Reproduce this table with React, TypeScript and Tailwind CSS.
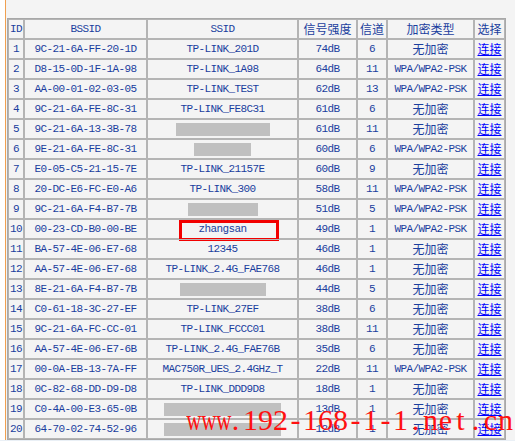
type Row = {
  bssid: string
  ssid?: string
  mask?: number
  signal: string
  channel: string
  enc: string
}

const rows: Row[] = [
  { bssid: '9C-21-6A-FF-20-1D', ssid: 'TP-LINK_201D', signal: '74dB', channel: '6', enc: '无加密' },
  { bssid: 'D8-15-0D-1F-1A-98', ssid: 'TP-LINK_1A98', signal: '64dB', channel: '11', enc: 'WPA/WPA2-PSK' },
  { bssid: 'AA-00-01-02-03-05', ssid: 'TP-LINK_TEST', signal: '62dB', channel: '13', enc: 'WPA/WPA2-PSK' },
  { bssid: '9C-21-6A-FE-8C-31', ssid: 'TP-LINK_FE8C31', signal: '61dB', channel: '6', enc: '无加密' },
  { bssid: '9C-21-6A-13-3B-78', mask: 94, signal: '61dB', channel: '11', enc: '无加密' },
  { bssid: '9E-21-6A-FE-8C-31', mask: 57, signal: '60dB', channel: '6', enc: 'WPA/WPA2-PSK' },
  { bssid: 'E0-05-C5-21-15-7E', ssid: 'TP-LINK_21157E', signal: '60dB', channel: '9', enc: '无加密' },
  { bssid: '20-DC-E6-FC-E0-A6', ssid: 'TP-LINK_300', signal: '58dB', channel: '11', enc: 'WPA/WPA2-PSK' },
  { bssid: '9C-21-6A-F4-B7-7B', mask: 70, signal: '51dB', channel: '5', enc: 'WPA/WPA2-PSK' },
  { bssid: '00-23-CD-B0-00-BE', ssid: 'zhangsan', signal: '49dB', channel: '1', enc: 'WPA/WPA2-PSK' },
  { bssid: 'BA-57-4E-06-E7-68', ssid: '12345', signal: '46dB', channel: '1', enc: '无加密' },
  { bssid: 'AA-57-4E-06-E7-68', ssid: 'TP-LINK_2.4G_FAE768', signal: '46dB', channel: '1', enc: '无加密' },
  { bssid: '8E-21-6A-F4-B7-7B', mask: 86, signal: '44dB', channel: '5', enc: '无加密' },
  { bssid: 'C0-61-18-3C-27-EF', ssid: 'TP-LINK_27EF', signal: '38dB', channel: '6', enc: '无加密' },
  { bssid: '9C-21-6A-FC-CC-01', ssid: 'TP-LINK_FCCC01', signal: '38dB', channel: '11', enc: '无加密' },
  { bssid: 'AA-57-4E-06-E7-6B', ssid: 'TP-LINK_2.4G_FAE76B', signal: '35dB', channel: '6', enc: '无加密' },
  { bssid: '00-0A-EB-13-7A-FF', ssid: 'MAC750R_UES_2.4GHz_T', signal: '22dB', channel: '11', enc: 'WPA/WPA2-PSK' },
  { bssid: '0C-82-68-DD-D9-D8', ssid: 'TP-LINK_DDD9D8', signal: '18dB', channel: '1', enc: '无加密' },
  { bssid: 'C0-4A-00-E3-65-0B', mask: 117, signal: '13dB', channel: '1', enc: '无加密' },
  { bssid: '64-70-02-74-52-96', mask: 117, signal: '12dB', channel: '1', enc: '无加密' },
]

const cell = 'h-5 p-0 border border-[#b4b4b4] text-center align-middle leading-none text-[#1a3e9e]'
const mono = "font-['Liberation_Mono',monospace] text-[11px] tracking-[-0.6px]"
const cn = "font-['Noto_Sans_CJK_SC',sans-serif] text-[12px]"

const watermark = 'www.192-168-1-1.net.cn'

export default function App() {
  return (
    <div className="relative w-[515px] h-[441px] overflow-hidden bg-[#f4f4f4] flex flex-col">
      <div className="flex flex-1">
        <div className="w-[5px] bg-white" />
        <div className="w-px bg-[#f0a050]" />
        <div className="flex-1 pt-[18px] pl-px">
          <table className="table-fixed border-separate border-spacing-0 border border-[#a8a8a8] w-[499px] bg-[#f4f4f4]">
            <thead>
              <tr>
                <th className={`${cell} ${mono} font-normal w-[16px]`}>ID</th>
                <th className={`${cell} ${mono} font-normal w-[123px]`}>BSSID</th>
                <th className={`${cell} ${mono} font-normal w-[151px]`}>SSID</th>
                <th className={`${cell} ${cn} font-normal w-[59px]`}>信号强度</th>
                <th className={`${cell} ${cn} font-normal w-[30px]`}>信道</th>
                <th className={`${cell} ${cn} font-normal w-[87px]`}>加密类型</th>
                <th className={`${cell} ${cn} font-normal w-[31px]`}>选择</th>
              </tr>
            </thead>
            <tbody>
              {rows.map((r, i) => (
                <tr key={r.bssid}>
                  <td className={`${cell} ${mono}`}>{i + 1}</td>
                  <td className={`${cell} ${mono}`}>{r.bssid}</td>
                  <td className={`${cell} ${mono} relative`}>
                    {r.mask ? (
                      <div className="mx-auto h-[13px] bg-[#c0c0c0]" style={{ width: r.mask }} />
                    ) : (
                      r.ssid
                    )}
                    {r.ssid === 'zhangsan' && (
                      <div className="absolute left-[31px] top-0 w-[100px] h-[21px] border-[3px] border-[#f20000]" />
                    )}
                  </td>
                  <td className={`${cell} ${mono}`}>{r.signal}</td>
                  <td className={`${cell} ${mono}`}>{r.channel}</td>
                  <td className={`${cell} ${r.enc === '无加密' ? cn : mono}`}>{r.enc}</td>
                  <td className={`${cell} ${cn}`}>
                    <a href="#" className="text-[#0000ff] underline">连接</a>
                  </td>
                </tr>
              ))}
            </tbody>
          </table>
        </div>
      </div>
      <div className="h-px bg-[#eaf0f6]" />

      <div className="absolute left-[183px] top-[405px] flex text-[30px] leading-none text-[#ff1010] font-['Liberation_Serif',serif] pointer-events-none">
        {watermark.split('').map((ch, i) => (
          <span key={i} className="inline-block w-[15px] text-center">
            <span className={ch === 'w' ? 'inline-block scale-x-[0.7]' : 'inline-block'}>{ch}</span>
          </span>
        ))}
      </div>
    </div>
  )
}
